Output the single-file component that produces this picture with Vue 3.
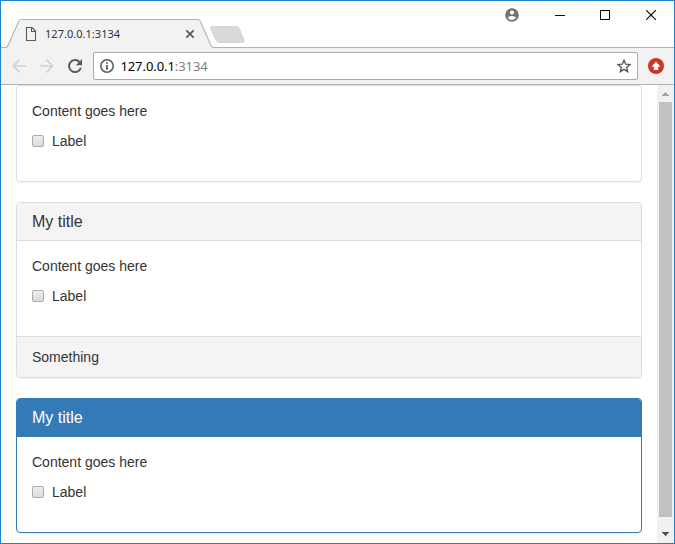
<script setup>
const panels = [
  { id: 'plain', title: '', footer: '' },
  { id: 'default', title: 'My title', footer: 'Something' },
  { id: 'primary', title: 'My title', footer: '' },
]
</script>

<template>
  <div class="window">
    <header class="titlebar">
      <div class="tab">
        <svg class="tab-shape" width="245" height="30" viewBox="0 0 245 30">
          <path d="M0 29.5H4.5Q6.2 29.5 7 27.5L17.8 3.2Q18.5 1.5 20 1.5H197Q198.6 1.5 199.3 3.2L210 27.5Q210.8 29.5 212.5 29.5V30H0Z" fill="#f2f2f2" />
          <path d="M0 29.5H4.5Q6.2 29.5 7 27.5L17.8 3.2Q18.5 1.5 20 1.5H197Q198.6 1.5 199.3 3.2L210 27.5Q210.8 29.5 212.5 29.5H245" fill="none" stroke="#b3b3b3" stroke-width="1.1" />
          <path d="M210.500 8.500H235.500Q237.300 8.500 238 10L243 22Q243.700 24.500 241.500 24.500H218Q216 24.500 215.200 22.500L209.500 10Q209 8.500 210.500 8.500Z" fill="#d9d9d9" stroke="#cfcfcf" stroke-width=".8" />
        </svg>
        <div class="tab-content">
          <svg width="12" height="14" viewBox="0 0 12 14" fill="none" stroke="#5a5a5a" stroke-width="1.100">
            <path d="M1.500 .500H7L10.500 4V13.500H1.500ZM6.500 .500V4.500H10.500" />
          </svg>
          <span class="tab-title">127.0.0.1:3134</span>
          <svg width="10" height="10" viewBox="0 0 10 10" fill="none" stroke="#5a5a5a" stroke-width="1.700">
            <path d="M1.300 1.300L8.700 8.700M8.700 1.300L1.300 8.700" />
          </svg>
        </div>
      </div>
      <div class="controls">
        <svg width="14" height="14" viewBox="0 0 14 14">
          <circle cx="7" cy="7" r="6.800" fill="#737373" />
          <circle cx="7" cy="4.500" r="2.100" fill="#fff" />
          <path d="M2.900 9.600Q4.300 8 7 8T11.100 9.600Q9.800 12 7 12T2.900 9.600Z" fill="#fff" />
        </svg>
        <svg class="min" width="10" height="11" viewBox="0 0 10 11"><path d="M0 5.500H10" stroke="#000" /></svg>
        <svg class="max" width="10" height="10" viewBox="0 0 10 10"><path d="M.5 .5H9.500V9.500H.5Z" fill="none" stroke="#000" /></svg>
        <svg class="close" width="10" height="10" viewBox="0 0 10 10"><path d="M0 0L10 10M10 0L0 10" stroke="#000" stroke-width="1.100" /></svg>
      </div>
    </header>

    <div class="toolbar">
      <svg class="back" width="14" height="14" viewBox="0 0 14 14" fill="none" stroke="#d2d2d2" stroke-width="1.700">
        <path d="M14 7H1.500M7.500 .7L1.300 7L7.500 13.300" />
      </svg>
      <svg class="forward" width="14" height="14" viewBox="0 0 14 14" fill="none" stroke="#d2d2d2" stroke-width="1.700">
        <path d="M0 7H12.500M6.500 .7L12.700 7L6.500 13.300" />
      </svg>
      <svg class="reload" width="14" height="14" viewBox="0 0 14 14">
        <path d="M11.500 3A6 6 0 1 0 12.800 8.800" fill="none" stroke="#5a5a5a" stroke-width="2" />
        <path d="M14 0V6.200H7.800Z" fill="#5a5a5a" />
      </svg>
      <div class="omnibox">
        <svg width="14" height="14" viewBox="0 0 14 14">
          <circle cx="7" cy="7" r="6.200" fill="none" stroke="#5a5a5a" stroke-width="1.500" />
          <path d="M7 3.200V4.800M7 6V10.800" stroke="#5a5a5a" stroke-width="1.800" />
        </svg>
        <span class="url">127.0.0.1<span class="port">:3134</span></span>
        <svg class="star" width="14" height="14" viewBox="0 0 14 14">
          <path d="M7 1.200L8.700 5.200L13 5.600L9.700 8.400L10.700 12.700L7 10.400L3.300 12.700L4.300 8.400L1 5.600L5.300 5.200Z" fill="none" stroke="#5a5a5a" stroke-width="1.400" />
        </svg>
      </div>
      <svg class="extension" width="16" height="16" viewBox="0 0 16 16">
        <circle cx="8" cy="8" r="8" fill="#c9372c" />
        <path d="M8 3.800L12.400 8.600H10.200V12H5.800V8.600H3.600Z" fill="#fff" />
      </svg>
    </div>

    <div class="viewport">
      <main class="page">
        <section v-for="panel in panels" :key="panel.id" class="panel" :class="panel.id">
          <h3 v-if="panel.title" class="heading">{{ panel.title }}</h3>
          <div class="body">
            <p>Content goes here</p>
            <label class="check"><input type="checkbox" /><span>Label</span></label>
          </div>
          <div v-if="panel.footer" class="footer">{{ panel.footer }}</div>
        </section>
      </main>
      <div class="scrollbar">
        <svg width="17" height="17" viewBox="0 0 17 17" shape-rendering="crispEdges"><path d="M8.500 7L12.500 11H4.500Z" fill="#a3a3a3" /></svg>
        <div class="thumb"></div>
        <svg width="17" height="17" viewBox="0 0 17 17" shape-rendering="crispEdges"><path d="M4.500 6H12.500L8.500 10Z" fill="#505050" /></svg>
      </div>
    </div>
  </div>
</template>

<style>
body {
  margin: 0;
  background: #fff;
}
</style>

<style scoped>
* {
  box-sizing: border-box;
}
svg {
  display: block;
  flex: none;
}
.window {
  display: flex;
  flex-direction: column;
  width: 675px;
  height: 544px;
  border: 1px solid #1883d7;
  overflow: hidden;
}
.titlebar {
  display: flex;
  justify-content: space-between;
  height: 47px;
  flex: none;
  border-bottom: 1px solid #b3b3b3;
}
.tab {
  display: grid;
  width: 245px;
  height: 30px;
  margin-top: 17px;
}
.tab-shape,
.tab-content {
  grid-area: 1 / 1;
}
.tab-content {
  display: flex;
  align-items: center;
  width: 194px;
  height: 30px;
  padding: 2px 0 0 24px;
}
.tab-title {
  flex: 1;
  margin-left: 8px;
  font: 11px/16px "Noto Sans", sans-serif;
  letter-spacing: 0.03px;
  color: #333;
}
.controls {
  display: flex;
  align-items: center;
  height: 28px;
  padding-right: 18px;
}
.min {
  margin-left: 36px;
}
.max {
  margin-left: 35px;
}
.close {
  margin-left: 36px;
}
.toolbar {
  display: flex;
  align-items: center;
  height: 37px;
  flex: none;
  padding: 0 10px 0 11px;
  background: #f2f2f2;
  border-bottom: 1px solid #b3b0b0;
}
.forward,
.reload {
  margin-left: 14px;
}
.omnibox {
  display: flex;
  align-items: center;
  flex: 1;
  height: 28px;
  margin: 0 10px 0 11px;
  padding: 0 6px;
  background: #fff;
  border: 1px solid #a9a9a9;
  border-radius: 2px;
}
.url {
  flex: 1;
  margin-left: 6.4px;
  font: 13px/18px "Noto Sans", sans-serif;
  letter-spacing: -0.07px;
  color: #000;
}
.port {
  color: #808080;
}
.viewport {
  display: flex;
  flex: 1;
  min-height: 0;
}
.page {
  display: flex;
  flex-direction: column;
  gap: 20px;
  flex: 1;
  padding: 0 15px;
  font: 14px/20px "Liberation Sans", Arial, sans-serif;
  color: #333;
}
.panel {
  flex: none;
  border: 1px solid #ddd;
  border-radius: 4px;
  box-shadow: 0 1px 1px rgba(0, 0, 0, 0.05);
}
.heading {
  height: 38px;
  margin: 0;
  padding: 10px 15px;
  font-size: 16px;
  line-height: 17px;
  font-weight: 400;
  background: #f4f4f4;
  border-bottom: 1px solid #ddd;
  border-radius: 3px 3px 0 0;
}
.body {
  height: 95px;
  padding: 15px;
}
.body p {
  margin: 0 0 10px;
}
.check {
  display: flex;
  align-items: center;
  gap: 8px;
}
.check input {
  appearance: none;
  width: 12px;
  height: 12px;
  margin: 0;
  border: 1px solid #acacac;
  border-radius: 2px;
  background: linear-gradient(#eee, #dadada);
}
.footer {
  height: 41px;
  padding: 10px 15px;
  background: #f4f4f4;
  border-top: 1px solid #ddd;
  border-radius: 0 0 3px 3px;
}
.primary {
  border-color: #337ab7;
}
.primary .heading {
  color: #fff;
  background: #337ab7;
  border-color: #337ab7;
}
.scrollbar {
  display: flex;
  flex-direction: column;
  width: 17px;
  background: #f1f1f1;
}
.thumb {
  flex: 1;
  width: 13px;
  margin: 0 2px 9px;
  background: #c1c1c1;
}
</style>
